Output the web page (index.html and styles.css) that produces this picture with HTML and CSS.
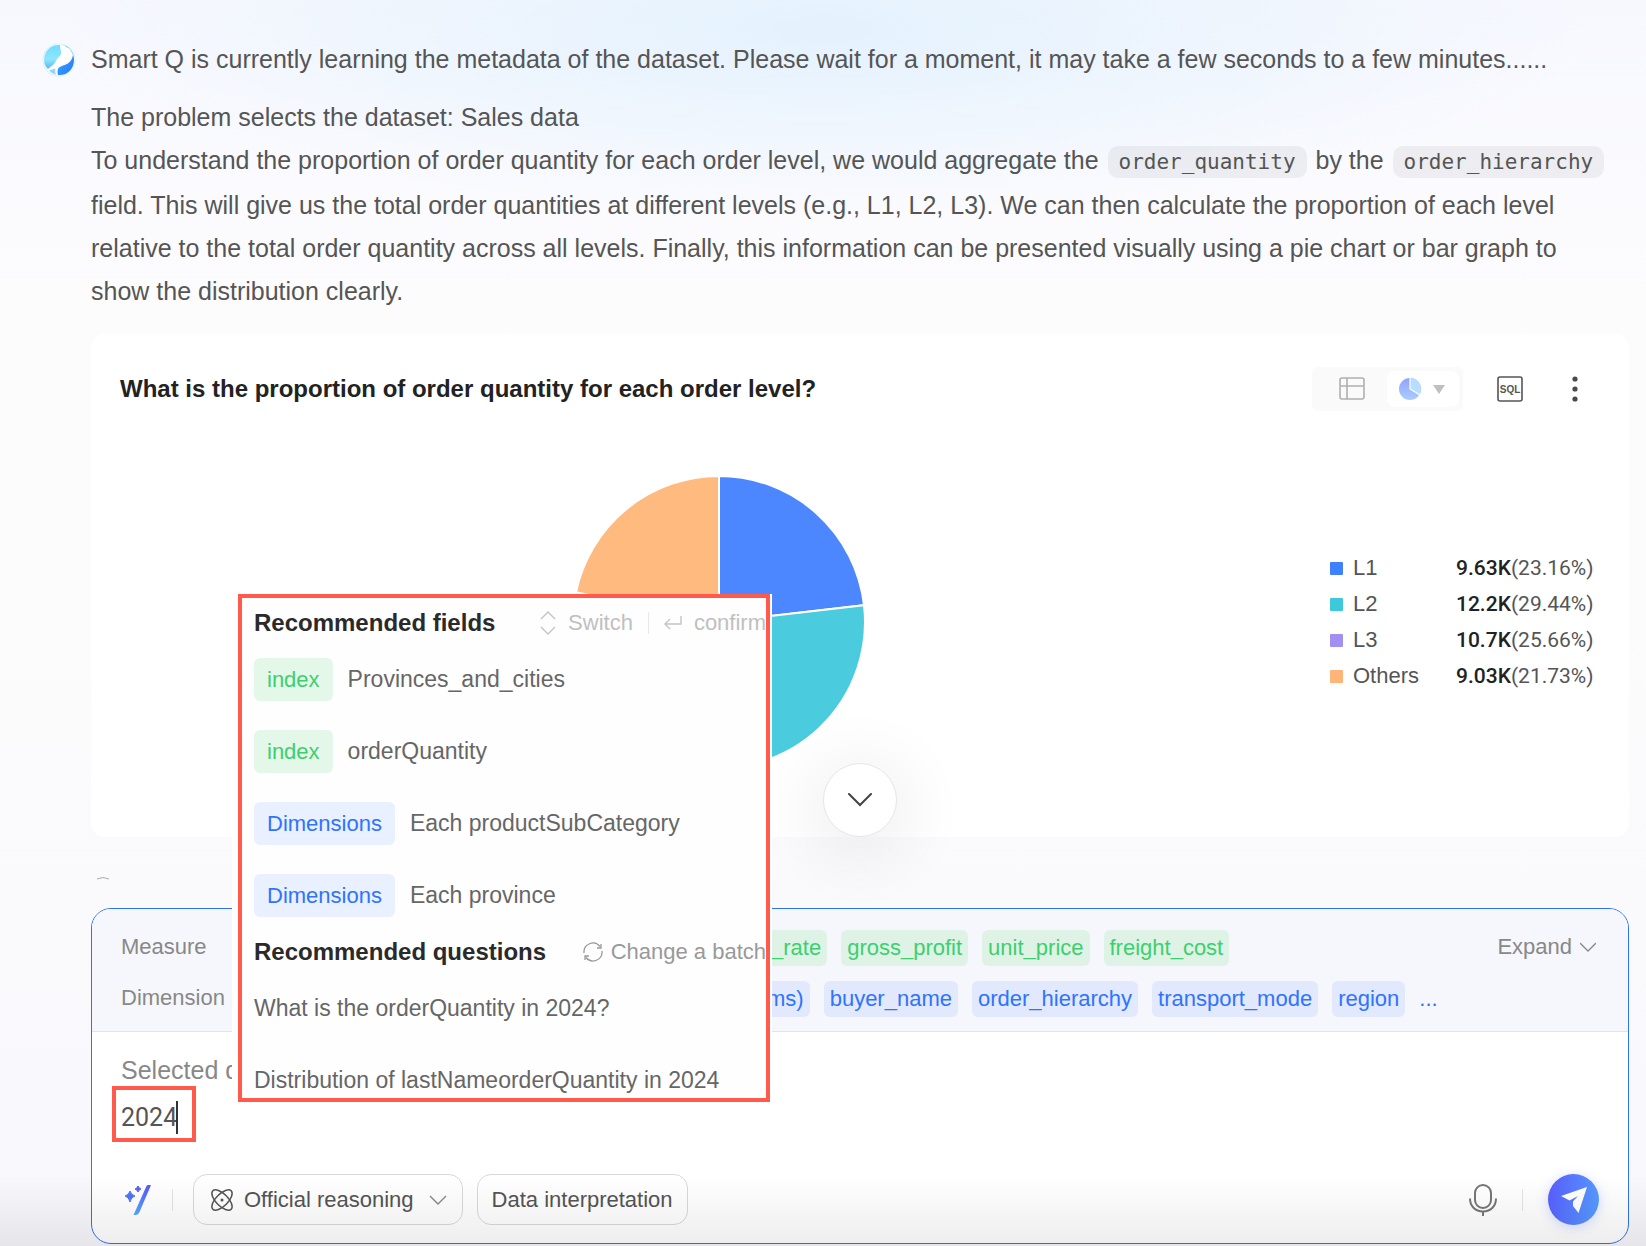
FILE: index.html
```html
<!DOCTYPE html>
<html lang="en">
<head>
    <meta charset="UTF-8">
    <meta name="viewport" content="width=device-width, initial-scale=1.0">
    <title>Smart Q</title>
    <link rel="stylesheet" href="styles.css">
</head>
<body>

<main class="chat">
    <section class="message">
        <svg class="avatar" viewBox="0 0 34 36">
            <defs>
                <linearGradient id="light" x1="0" y1="0" x2="0" y2="1">
                    <stop offset="0" stop-color="#6fdcff"/>
                    <stop offset="0.6" stop-color="#8fe6fb"/>
                    <stop offset="1" stop-color="#5bb6f5"/>
                </linearGradient>
                <linearGradient id="deep" x1="0" y1="0" x2="1" y2="1">
                    <stop offset="0" stop-color="#35b4ff"/>
                    <stop offset="1" stop-color="#2a74ff"/>
                </linearGradient>
            </defs>
            <circle cx="17" cy="18" r="16.500" fill="#d5f3ff"/>
            <circle cx="17" cy="18" r="15.500" fill="#fff"/>
            <path d="M18 3C9 2 2 9 2 18c0 4 1.500 7 4 9 3-3 6-4 8-8 1.500-4 6-5 5-9-.2-2-1-4-1-7z" fill="url(#light)"/>
            <path d="M19 3c5 .5 10 3.500 12 10-2 12-13 9-15 14-.7 2-.5 4 0 6 9 1 16-6 16-15S26 3 19 3z" fill="url(#deep)"/>
            <path d="M19 3.500c1 2.500 6 4 6 8-1 6-9 8-12 14-1 2-1 4 .5 7-3-.5-5-2-7-4 4-5 9-6 10.500-11C18 13 21 11 19 3.500z" fill="#fff"/>
            <path d="M7 28.500c2 2 4 3.500 7 4-1-2-1-4-.5-6z" fill="#8fd6ff"/>
        </svg>
        <div class="message-body">
            <p>Smart Q is currently learning the metadata of the dataset. Please wait for a moment, it may take a few seconds to a few minutes......</p>
            <p>
                The problem selects the dataset: Sales data<br>
                To understand the proportion of order quantity for each order level, we would aggregate the <code>order_quantity</code> by the <code>order_hierarchy</code><br>
                field. This will give us the total order quantities at different levels (e.g., L1, L2, L3). We can then calculate the proportion of each level<br>
                relative to the total order quantity across all levels. Finally, this information can be presented visually using a pie chart or bar graph to<br>
                show the distribution clearly.
            </p>
        </div>
    </section>

    <div class="content">
        <section class="card">
            <header class="card-header">
                <h2>What is the proportion of order quantity for each order level?</h2>
                <div class="view-switch">
                    <button class="view-table" aria-label="Table">
                        <svg width="26" height="24" viewBox="0 0 26 24" fill="none" stroke="#b0b0b0" stroke-width="1.600">
                            <rect x="1" y="1" width="24" height="21" rx="2"/>
                            <path d="M1 9h24M8 1v21"/>
                        </svg>
                    </button>
                    <button class="view-chart" aria-label="Pie chart">
                        <svg width="22" height="22" viewBox="0 0 22 22">
                            <defs>
                                <linearGradient id="mini" x1="0" y1="0" x2="0" y2="1">
                                    <stop offset="0" stop-color="#94a2ff"/>
                                    <stop offset="1" stop-color="#a9cdff"/>
                                </linearGradient>
                            </defs>
                            <circle cx="11" cy="11" r="11" fill="url(#mini)"/>
                            <path d="M11 11V0a11 11 0 0 1 9.500 16.500z" fill="#b7defe"/>
                            <path d="M11 0v11l10 6" fill="none" stroke="#fff" stroke-width="1.200"/>
                        </svg>
                        <svg width="12" height="9" viewBox="0 0 12 9"><path d="M0 0h12L6 9z" fill="#c0c0c0"/></svg>
                    </button>
                </div>
                <button class="icon-button" aria-label="SQL">
                    <svg width="26" height="26" viewBox="0 0 26 26">
                        <rect x="1" y="1" width="24" height="24" rx="2" fill="none" stroke="#555" stroke-width="1.600"/>
                        <text class="sql-text" x="13" y="17" text-anchor="middle">SQL</text>
                    </svg>
                </button>
                <button class="icon-button more" aria-label="More">
                    <svg width="6" height="26" viewBox="0 0 6 26" fill="#4a4a4a">
                        <circle cx="3" cy="3" r="2.600"/>
                        <circle cx="3" cy="13" r="2.600"/>
                        <circle cx="3" cy="23" r="2.600"/>
                    </svg>
                </button>
            </header>
            <div class="chart">
                <div class="pie-wrap">
                    <svg class="pie" viewBox="-146 -146 292 292" stroke="#fff" stroke-width="2">
                        <path d="M0 0V-146A146 146 0 0 1 145 -16.800z" fill="#4c87ff"/>
                        <path d="M0 0L145 -16.800A146 146 0 0 1 -23.700 144z" fill="#4bcbde"/>
                        <path d="M0 0L-23.700 144A146 146 0 0 1 -143 -29.700z" fill="#a693f4"/>
                        <path d="M0 0L-143 -29.700A146 146 0 0 1 0 -146z" fill="#ffba80"/>
                    </svg>
                </div>
                <ul class="legend">
                    <li><i class="swatch l1"></i><span>L1</span><span class="value"><b>9.63K</b>(23.16%)</span></li>
                    <li><i class="swatch l2"></i><span>L2</span><span class="value"><b>12.2K</b>(29.44%)</span></li>
                    <li><i class="swatch l3"></i><span>L3</span><span class="value"><b>10.7K</b>(25.66%)</span></li>
                    <li><i class="swatch others"></i><span>Others</span><span class="value"><b>9.03K</b>(21.73%)</span></li>
                </ul>
            </div>
            <button class="scroll-down" aria-label="Scroll down">
                <svg width="24" height="14" viewBox="0 0 24 14" fill="none" stroke="#444" stroke-width="2" stroke-linecap="round"><path d="M1 1l11 11L23 1"/></svg>
            </button>
        </section>

        <svg class="next-item" viewBox="0 0 12 3" fill="none" stroke="#aaa"><path d="M0 2Q6 -1 12 2"/></svg>

        <section class="composer">
            <div class="fields">
                <div class="field-row">
                    <span class="field-label">Measure</span>
                    <ul class="tags green">
                        <li>_rate</li>
                        <li>gross_profit</li>
                        <li>unit_price</li>
                        <li>freight_cost</li>
                    </ul>
                    <button class="expand">Expand
                        <svg width="16" height="10" viewBox="0 0 16 10" fill="none" stroke="#888" stroke-width="1.300"><path d="M0 1l8 8 8-8"/></svg>
                    </button>
                </div>
                <div class="field-row">
                    <span class="field-label">Dimension</span>
                    <ul class="tags blue">
                        <li>ms)</li>
                        <li>buyer_name</li>
                        <li>order_hierarchy</li>
                        <li>transport_mode</li>
                        <li>region</li>
                    </ul>
                    <span class="ellipsis">...</span>
                </div>
            </div>
            <div class="entry">
                <label for="question">Selected d</label>
                <div class="entry-box">
                    <input id="question" type="text" value="2024">
                    <span class="caret"></span>
                </div>
            </div>
            <div class="toolbar">
                <button class="magic" aria-label="Inspire">
                    <svg width="28" height="32" viewBox="0 0 28 32">
                        <defs>
                            <linearGradient id="wand" x1="1" y1="0" x2="0" y2="1">
                                <stop offset="0" stop-color="#5a50f8"/>
                                <stop offset="1" stop-color="#55b0ff"/>
                            </linearGradient>
                        </defs>
                        <path d="M22.500 2q.5-1 2-1H27L15.500 28q-1.300 3-3.500 3H9.500z" fill="url(#wand)"/>
                        <path d="M6 7q1 4 5 5-4 1-5 6-1-5-5-6 4-1 5-5z" fill="#4f74fb" stroke="#4f74fb"/>
                        <path d="M14 2q.7 2.300 3 3-2.300.7-3 3-.7-2.300-3-3 2.300-.7 3-3z" fill="#5a60f8" stroke="#5a60f8"/>
                    </svg>
                </button>
                <span class="divider"></span>
                <button class="pill">
                    <svg width="22" height="22" viewBox="0 0 22 22" fill="none" stroke="#555" stroke-width="1.500">
                        <ellipse cx="11" cy="11" rx="13" ry="6" transform="rotate(45 11 11)"/>
                        <ellipse cx="11" cy="11" rx="13" ry="6" transform="rotate(-45 11 11)"/>
                        <circle cx="11" cy="11" r="1.500" fill="#555" stroke="none"/>
                    </svg>
                    Official reasoning
                    <svg class="pill-arrow" width="18" height="10" viewBox="0 0 18 10" fill="none" stroke="#888" stroke-width="1.400"><path d="M1 1l8 8 8-8"/></svg>
                </button>
                <button class="pill">Data interpretation</button>
                <button class="mic" aria-label="Voice">
                    <svg width="28" height="32" viewBox="0 0 28 32" fill="none" stroke="#777" stroke-width="2">
                        <rect x="6" y="1" width="16" height="23" rx="8"/>
                        <path d="M1 14.500C1 22 6 27.500 14 27.500S27 22 27 14.500M14 27.500V32"/>
                    </svg>
                </button>
                <span class="divider"></span>
                <button class="send" aria-label="Send">
                    <svg width="26" height="26" viewBox="0 0 26 26" fill="#fff"><path d="M26 0L17.500 26 12 19V14.500L17 9 8.500 13.500 0 9z"/></svg>
                </button>
            </div>

            <aside class="popup">
                <div class="popup-title">
                    <h3>Recommended fields</h3>
                    <span class="hint light">
                        <svg width="16" height="24" viewBox="0 0 16 24" fill="none" stroke="#c4c4c4" stroke-width="1.400"><path d="M1 8l7-7 7 7M1 16l7 7 7-7"/></svg>
                        Switch
                        <span class="hint-divider"></span>
                        <svg width="18" height="14" viewBox="0 0 18 14" fill="none" stroke="#c4c4c4" stroke-width="1.400"><path d="M17 0v8H1M6 3L1 8l5 5"/></svg>
                        confirm
                    </span>
                </div>
                <ul class="options">
                    <li><span class="kind green">index</span>Provinces_and_cities</li>
                    <li><span class="kind green">index</span>orderQuantity</li>
                    <li><span class="kind blue">Dimensions</span>Each productSubCategory</li>
                    <li><span class="kind blue">Dimensions</span>Each province</li>
                </ul>
                <div class="popup-title">
                    <h3>Recommended questions</h3>
                    <button class="hint">
                        <svg width="20" height="20" viewBox="0 0 20 20" fill="none" stroke="#999" stroke-width="1.300"><path d="M1 11a9 9 0 0 1 16-6.500M18 2v4h-4M19 9a9 9 0 0 1-16 6.500M2 18v-4h4"/></svg>
                        Change a batch
                    </button>
                </div>
                <ul class="options">
                    <li>What is the orderQuantity in 2024?</li>
                    <li>Distribution of lastNameorderQuantity in 2024</li>
                </ul>
            </aside>
        </section>
    </div>
</main>

</body>
</html>
```

FILE: styles.css
```css
* {
    box-sizing: border-box;
}

body {
    margin: 0;
    font-family: "Liberation Sans", Arial, sans-serif;
    font-size: 22px;
    color: #555;
    background-color: #fafafc;
    background-image:
        radial-gradient(ellipse 760px 190px at 50% 30px, rgba(226, 241, 253, 0.9), rgba(226, 241, 253, 0)),
        linear-gradient(#f7f8fe, #fbfbfe 200px, #fcfcfc 340px, #fcfcfc 600px, #f8f7fc);
    background-repeat: no-repeat;
}

/* soft shade along the bottom of the window */
body::after {
    content: "";
    position: fixed;
    left: 0;
    right: 0;
    bottom: 0;
    height: 70px;
    background: linear-gradient(rgba(0, 0, 0, 0), rgba(0, 0, 0, 0.07));
    pointer-events: none;
}

button {
    display: flex;
    align-items: center;
    padding: 0;
    border: none;
    background: none;
    font: inherit;
    color: inherit;
    cursor: pointer;
}

ul {
    list-style: none;
    margin: 0;
    padding: 0;
}

h2, h3, p {
    margin: 0;
}

.chat {
    padding: 38px 17px 2px 42px;
}

.message {
    display: flex;
    gap: 15px;
}

.avatar {
    flex: none;
    width: 34px;
    height: 36px;
    margin-top: 4px;
}

.message-body {
    font-size: 25px;
    line-height: 43px;
    white-space: nowrap;
}

.message-body p + p {
    margin-top: 15px;
}

code {
    display: inline-block;
    margin: 7px 2px 6px;
    padding: 0 11px;
    border-radius: 10px;
    background: rgba(0, 0, 0, 0.05);
    font-family: "DejaVu Sans Mono", monospace;
    font-size: 21px;
    line-height: 32px;
}

.content {
    margin: 21px 0 0 49px;
}

.card {
    position: relative;
    height: 503px;
    padding: 33px 46px 0 29px;
    border-radius: 14px;
    background: #fff;
}

.card-header {
    display: flex;
    align-items: center;
    padding-right: 5px;
    color: #222;
}

.card-header h2 {
    flex: 1;
    font-size: 24px;
}

.view-switch {
    display: flex;
    padding: 4px;
    border-radius: 6px;
    background: #fafafa;
}

.view-table {
    width: 71px;
    justify-content: center;
}

.view-chart {
    gap: 12px;
    height: 36px;
    padding: 0 14px 0 12px;
    border-radius: 8px;
    background: #fff;
}

.icon-button {
    margin-left: 34px;
}

.more {
    margin-left: 49px;
}

.sql-text {
    font-size: 10px;
    font-weight: bold;
    fill: #555;
}

.chart {
    display: flex;
    align-items: center;
    margin-top: 65px;
}

.pie-wrap {
    flex: 1;
    padding-right: 13px;
}

.pie {
    display: block;
    width: 292px;
    margin: 0 auto;
}

.legend li {
    display: flex;
    align-items: center;
    height: 36px;
}

.legend span:nth-child(2) {
    width: 103px;
}

.value {
    width: 127px;
    font-family: Roboto, sans-serif;
    font-size: 21px;
    white-space: nowrap;
}

.value b {
    color: #222;
    font-weight: 500;
}

.swatch {
    width: 13px;
    height: 13px;
    margin-right: 10px;
    border-radius: 1px;
}

.l1 { background: #3f80ff; }
.l2 { background: #3ec8dc; }
.l3 { background: #a18ff2; }
.others { background: #ffb577; }

.scroll-down {
    position: absolute;
    left: 50%;
    bottom: 0;
    width: 74px;
    height: 74px;
    margin-left: -37px;
    justify-content: center;
    border: 1px solid #e6e6e6;
    border-radius: 50%;
    background: #fff;
    box-shadow: 0 10px 60px 20px rgba(0, 0, 0, 0.05);
}

.next-item {
    display: block;
    width: 12px;
    height: 3px;
    margin: 40px 0 28px 6px;
}

.composer {
    position: relative;
    border: 1px solid #2f73f5;
    border-radius: 20px;
    background: #fff;
}

.fields {
    padding: 21px 32px 12px 29px;
    border-bottom: 1px solid #e3e4e8;
    border-radius: 19px 19px 0 0;
    background: #f6f7fc;
}

.field-row {
    display: flex;
    align-items: center;
    height: 36px;
    margin-bottom: 15px;
}

.field-row + .field-row {
    margin-bottom: 2px;
}

.field-label {
    width: 110px;
    padding-bottom: 2px;
    color: #888;
}

.tags {
    display: flex;
    gap: 14px;
    margin-left: 534px;
}

.blue.tags {
    margin-left: 530px;
}

.tags li {
    padding: 0 6px;
    border-radius: 6px;
    line-height: 36px;
}

.tags.green li {
    background: #def3e6;
}

.tags.blue li {
    background: #e2e9fc;
}

.green {
    color: #3dcf6e;
}

.blue {
    color: #2f73ff;
}

.ellipsis {
    margin-left: 14px;
    color: #2f73ff;
}

.expand {
    gap: 8px;
    margin-left: auto;
    padding-bottom: 2px;
    color: #888;
}

.entry {
    padding: 20px 20px 0;
}

.entry label {
    display: block;
    margin-left: 9px;
    font-size: 25px;
    line-height: 36px;
    color: #888;
}

.entry-box {
    display: flex;
    align-items: center;
    width: 84px;
    height: 56px;
    margin-top: -2px;
    padding-top: 7px;
    border: 4px solid #ff5a4c;
}

.entry input {
    width: 60px;
    padding: 0 0 0 5px;
    border: none;
    outline: none;
    background: none;
    font-family: Roboto, sans-serif;
    font-size: 25px;
    color: #555;
}

.caret {
    width: 2px;
    height: 33px;
    background: #333;
}

.toolbar {
    display: flex;
    align-items: center;
    padding: 32px 29px 18px 32px;
}

.divider {
    width: 1px;
    height: 22px;
    margin: 0 20px;
    background: #e4e4e4;
}

.pill {
    height: 51px;
    margin-right: 14px;
    padding: 0 14px;
    border: 1px solid #d9d9d9;
    border-radius: 14px;
}

.pill svg {
    margin: 0 11px 0 3px;
    overflow: visible;
}

.pill .pill-arrow {
    margin: 0 1px 0 15px;
}

.mic {
    margin-left: auto;
}

.mic + .divider {
    margin: 0 25px;
}

.send {
    justify-content: center;
    width: 51px;
    height: 51px;
    border-radius: 50%;
    background: linear-gradient(100deg, #5a5cff, #55a0ff);
    box-shadow: 0 2px 12px rgba(80, 120, 255, 0.25);
}

.popup {
    position: absolute;
    left: 146px;
    bottom: 141px;
    width: 532px;
    height: 508px;
    padding: 8px 0 0 12px;
    overflow: hidden;
    border: 4px solid #ff5a4c;
    background: #fefefe;
    box-shadow: -6px 0 0 #fff, 2px 0 0 #fff;
    white-space: nowrap;
}

.popup-title {
    display: flex;
    align-items: center;
    justify-content: space-between;
    height: 34px;
}

.popup h3 {
    font-size: 24px;
    color: #2a2a2a;
}

.hint {
    display: flex;
    align-items: center;
    gap: 8px;
    color: #999;
}

.hint.light {
    gap: 12px;
    color: #c0c0c0;
}

.hint-divider {
    width: 1px;
    height: 22px;
    margin: 0 3px;
    background: #e8e8e8;
}

.options li {
    display: flex;
    align-items: center;
    gap: 15px;
    height: 43px;
    margin: 18px 0 29px;
    font-size: 23px;
    color: #666;
}

.options li + li {
    margin-top: 0;
}

.options li:last-child {
    margin-bottom: 18px;
}

.kind {
    padding: 0 13px;
    border-radius: 6px;
    font-size: 22px;
    line-height: 43px;
}

.kind.green {
    background: #e4f8ea;
}

.kind.blue {
    background: #e9f0ff;
}
```
